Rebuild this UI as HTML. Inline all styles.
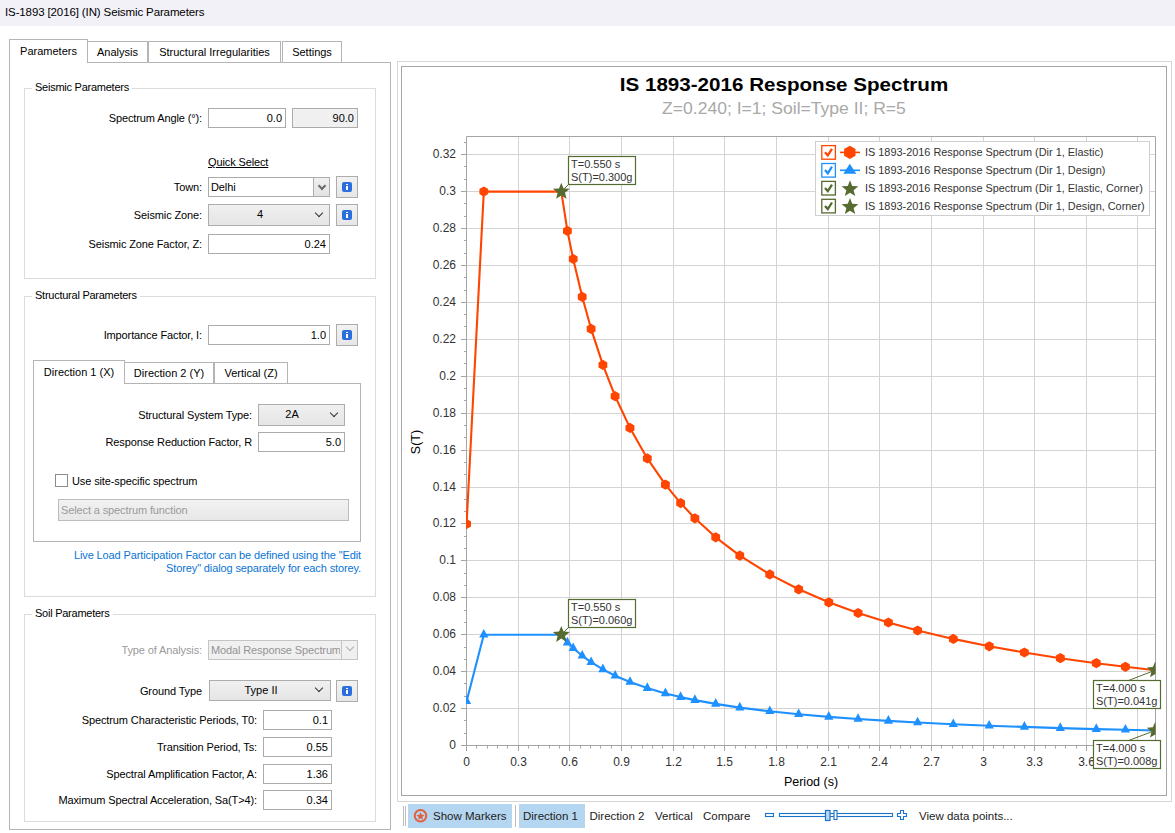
<!DOCTYPE html>
<html><head><meta charset="utf-8">
<style>
*{margin:0;padding:0;box-sizing:border-box}
html,body{width:1175px;height:833px;overflow:hidden;background:#fff;font-family:"Liberation Sans",sans-serif;font-size:11px;color:#000}
.a{position:absolute}
.t{position:absolute;white-space:nowrap;line-height:14px;height:14px;letter-spacing:-0.12px}
.r{text-align:right}
.bx{position:absolute;border:1px solid #ababab;background:#fff}
.gb{position:absolute;border:1px solid #dcdcdc}
.gt{position:absolute;background:#fff;padding:0 3px;line-height:14px;white-space:nowrap;letter-spacing:-0.25px}
.inp{position:absolute;border:1px solid #ababab;background:#fff;text-align:right;padding-right:3px;line-height:18px}
.cmb{position:absolute;border:1px solid #adadad;background:linear-gradient(#f0f0f0,#e5e5e5);text-align:center;line-height:19px}
.info{position:absolute;border:1px solid #adadad;background:linear-gradient(#f2f2f2,#e6e6e6)}
.info i{position:absolute;left:5px;top:5px;width:10px;height:10px;background:#2b6fde;border-radius:2px}
.info i:before{content:"";position:absolute;left:4px;top:2px;width:2px;height:1px;background:#fff}
.info i:after{content:"";position:absolute;left:4px;top:4px;width:2px;height:4px;background:#fff}
.chev{position:absolute;width:6px;height:6px;border-right:1px solid #333;border-bottom:1px solid #333;transform:rotate(45deg)}
.tab{position:absolute;border:1px solid #b4b4b4;border-bottom:none;background:#fff;text-align:center;line-height:20px}
</style></head><body>
<!-- title bar -->
<div class="a" style="left:0;top:0;width:1175px;height:26px;background:#f2f1f8"></div>
<div class="t" style="left:5px;top:5px;font-size:11.5px;color:#000">IS-1893 [2016] (IN) Seismic Parameters</div>

<!-- main tabs -->
<div class="a" style="left:9px;top:62px;width:382px;height:768px;border:1px solid #b4b4b4"></div>
<div class="tab" style="left:87px;top:41px;width:61px;height:21px">Analysis</div>
<div class="tab" style="left:148px;top:41px;width:133px;height:21px">Structural Irregularities</div>
<div class="tab" style="left:282px;top:41px;width:60px;height:21px">Settings</div>
<div class="tab" style="left:9px;top:39px;width:79px;height:24px;line-height:22px">Parameters</div>

<!-- group 1 -->
<div class="gb" style="left:24px;top:88px;width:352px;height:191px"></div>
<div class="gt" style="left:32px;top:80px">Seismic Parameters</div>
<div class="t r" style="left:60px;width:142px;top:111px">Spectrum Angle (°):</div>
<div class="inp" style="left:208px;top:108px;width:78px;height:20px">0.0</div>
<div class="inp" style="left:292px;top:108px;width:66px;height:20px;background:#f0f0f0">90.0</div>
<div class="t" style="left:208px;top:155px;text-decoration:underline">Quick Select</div>
<div class="t r" style="left:60px;width:142px;top:180px">Town:</div>
<div class="bx" style="left:208px;top:177px;width:122px;height:20px"></div>
<div class="t" style="left:211px;top:180px">Delhi</div>
<div class="a" style="left:313px;top:177px;width:17px;height:20px;border:1px solid #adadad;background:linear-gradient(#f0f0f0,#e3e3e3)"></div>
<div class="chev" style="left:318.5px;top:182.5px;border-color:#6a6a6a;border-width:0 2px 2px 0;width:6px;height:6px"></div>
<div class="info" style="left:336px;top:176px;width:22px;height:22px"><i></i></div>
<div class="t r" style="left:60px;width:142px;top:208px">Seismic Zone:</div>
<div class="cmb" style="left:208px;top:204px;width:122px;height:22px;padding-right:18px">4</div>
<div class="chev" style="left:316px;top:209.5px"></div>
<div class="info" style="left:336px;top:204px;width:22px;height:22px"><i></i></div>
<div class="t r" style="left:40px;width:162px;top:237px">Seismic Zone Factor, Z:</div>
<div class="inp" style="left:208px;top:234px;width:122px;height:20px">0.24</div>

<!-- group 2 -->
<div class="gb" style="left:24px;top:296px;width:352px;height:301px"></div>
<div class="gt" style="left:32px;top:288px">Structural Parameters</div>
<div class="t r" style="left:40px;width:162px;top:328px">Importance Factor, I:</div>
<div class="inp" style="left:208px;top:325px;width:122px;height:20px">1.0</div>
<div class="info" style="left:336px;top:324px;width:22px;height:22px"><i></i></div>
<div class="a" style="left:33px;top:383px;width:328px;height:159px;border:1px solid #b4b4b4"></div>
<div class="tab" style="left:124px;top:362px;width:90px;height:21px">Direction 2 (Y)</div>
<div class="tab" style="left:214px;top:362px;width:74px;height:21px">Vertical (Z)</div>
<div class="tab" style="left:33px;top:360px;width:92px;height:24px;line-height:22px">Direction 1 (X)</div>
<div class="t r" style="left:80px;width:172px;top:408px">Structural System Type:</div>
<div class="cmb" style="left:258px;top:404px;width:87px;height:22px;padding-right:19px">2A</div>
<div class="chev" style="left:331px;top:409.5px"></div>
<div class="t r" style="left:80px;width:172px;top:435px">Response Reduction Factor, R</div>
<div class="inp" style="left:258px;top:432px;width:87px;height:20px">5.0</div>
<div class="a" style="left:55px;top:474px;width:13px;height:13px;border:1px solid #8c8c8c;background:#fff"></div>
<div class="t" style="left:72px;top:474px">Use site-specific spectrum</div>
<div class="a" style="left:58px;top:499px;width:291px;height:22px;border:1px solid #bcbcbc;background:linear-gradient(#f2f2f2,#e8e8e8)"></div>
<div class="t" style="left:61px;top:503px;color:#9a9a9a">Select a spectrum function</div>
<div class="t r" style="left:39px;width:322px;top:548px;color:#0a74d4">Live Load Participation Factor can be defined using the "Edit</div>
<div class="t r" style="left:39px;width:322px;top:561px;color:#0a74d4">Storey" dialog separately for each storey.</div>

<!-- group 3 -->
<div class="gb" style="left:24px;top:614px;width:352px;height:208px"></div>
<div class="gt" style="left:32px;top:606px">Soil Parameters</div>
<div class="t r" style="left:40px;width:162px;top:643px;color:#9a9a9a">Type of Analysis:</div>
<div class="a" style="left:208px;top:640px;width:150px;height:20px;border:1px solid #c4c4c4;background:#f0f0f0"></div>
<div class="t" style="left:211px;top:643px;width:129px;overflow:hidden;color:#949494">Modal Response Spectrum</div>
<div class="a" style="left:341px;top:641px;width:1px;height:18px;background:#c4c4c4"></div>
<div class="chev" style="left:347px;top:644px;border-color:#b0b0b0"></div>
<div class="t r" style="left:40px;width:162px;top:684px">Ground Type</div>
<div class="cmb" style="left:209px;top:680px;width:122px;height:21px;padding-right:18px;line-height:18px">Type II</div>
<div class="chev" style="left:316px;top:685px"></div>
<div class="info" style="left:336px;top:680px;width:22px;height:22px"><i></i></div>
<div class="t r" style="left:30px;width:227px;top:713px">Spectrum Characteristic Periods, T0:</div>
<div class="inp" style="left:263px;top:710px;width:69px;height:20px">0.1</div>
<div class="t r" style="left:30px;width:227px;top:740px">Transition Period, Ts:</div>
<div class="inp" style="left:263px;top:737px;width:69px;height:20px">0.55</div>
<div class="t r" style="left:30px;width:227px;top:767px">Spectral Amplification Factor, A:</div>
<div class="inp" style="left:263px;top:764px;width:69px;height:20px">1.36</div>
<div class="t r" style="left:30px;width:227px;top:793px">Maximum Spectral Acceleration, Sa(T&gt;4):</div>
<div class="inp" style="left:263px;top:790px;width:69px;height:20px">0.34</div>

<!-- toolbar -->
<div class="a" style="left:408px;top:804px;width:104px;height:24px;background:#b5d6f0"></div>
<div class="a" style="left:519px;top:804px;width:66px;height:24px;background:#b5d6f0"></div>
<div class="t" style="left:433px;top:809px;font-size:11.5px;color:#222;letter-spacing:0">Show Markers</div>
<div class="t" style="left:523px;top:809px;font-size:11.5px;color:#222;letter-spacing:0">Direction 1</div>
<div class="t" style="left:589.5px;top:809px;font-size:11.5px;color:#222;letter-spacing:0">Direction 2</div>
<div class="t" style="left:655px;top:809px;font-size:11.5px;color:#222;letter-spacing:0">Vertical</div>
<div class="t" style="left:703px;top:809px;font-size:11.5px;color:#222;letter-spacing:0">Compare</div>
<div class="t" style="left:919px;top:809px;font-size:11.5px;color:#222;letter-spacing:0">View data points...</div>

<svg class="a" style="left:0;top:0" width="1175" height="833" viewBox="0 0 1175 833">
<rect x="397.5" y="61.5" width="774" height="740" fill="none" stroke="#d6d6d6"/>
<rect x="401.5" y="66.5" width="765" height="729" fill="none" stroke="#a6a6a6"/>
<text x="784" y="91" text-anchor="middle" font-family="Liberation Sans" font-weight="bold" font-size="18" fill="#000" transform="translate(784 0) scale(1.145 1) translate(-784 0)">IS 1893-2016 Response Spectrum</text>
<text x="784" y="114.5" text-anchor="middle" font-family="Liberation Sans" font-size="16" fill="#a9a9a9" transform="translate(784 0) scale(1.097 1) translate(-784 0)">Z=0.240; I=1; Soil=Type II; R=5</text>
<line x1="518.5" y1="137" x2="518.5" y2="745" stroke="#d3d3d3" stroke-width="1"/>
<line x1="569.5" y1="137" x2="569.5" y2="745" stroke="#d3d3d3" stroke-width="1"/>
<line x1="621.5" y1="137" x2="621.5" y2="745" stroke="#d3d3d3" stroke-width="1"/>
<line x1="673.5" y1="137" x2="673.5" y2="745" stroke="#d3d3d3" stroke-width="1"/>
<line x1="724.5" y1="137" x2="724.5" y2="745" stroke="#d3d3d3" stroke-width="1"/>
<line x1="776.5" y1="137" x2="776.5" y2="745" stroke="#d3d3d3" stroke-width="1"/>
<line x1="828.5" y1="137" x2="828.5" y2="745" stroke="#d3d3d3" stroke-width="1"/>
<line x1="879.5" y1="137" x2="879.5" y2="745" stroke="#d3d3d3" stroke-width="1"/>
<line x1="931.5" y1="137" x2="931.5" y2="745" stroke="#d3d3d3" stroke-width="1"/>
<line x1="983.5" y1="137" x2="983.5" y2="745" stroke="#d3d3d3" stroke-width="1"/>
<line x1="1034.5" y1="137" x2="1034.5" y2="745" stroke="#d3d3d3" stroke-width="1"/>
<line x1="1086.5" y1="137" x2="1086.5" y2="745" stroke="#d3d3d3" stroke-width="1"/>
<line x1="1137.5" y1="137" x2="1137.5" y2="745" stroke="#d3d3d3" stroke-width="1"/>
<line x1="466" y1="708.5" x2="1155" y2="708.5" stroke="#d3d3d3" stroke-width="1"/>
<line x1="466" y1="671.5" x2="1155" y2="671.5" stroke="#d3d3d3" stroke-width="1"/>
<line x1="466" y1="634.5" x2="1155" y2="634.5" stroke="#d3d3d3" stroke-width="1"/>
<line x1="466" y1="597.5" x2="1155" y2="597.5" stroke="#d3d3d3" stroke-width="1"/>
<line x1="466" y1="560.5" x2="1155" y2="560.5" stroke="#d3d3d3" stroke-width="1"/>
<line x1="466" y1="523.5" x2="1155" y2="523.5" stroke="#d3d3d3" stroke-width="1"/>
<line x1="466" y1="487.5" x2="1155" y2="487.5" stroke="#d3d3d3" stroke-width="1"/>
<line x1="466" y1="450.5" x2="1155" y2="450.5" stroke="#d3d3d3" stroke-width="1"/>
<line x1="466" y1="413.5" x2="1155" y2="413.5" stroke="#d3d3d3" stroke-width="1"/>
<line x1="466" y1="376.5" x2="1155" y2="376.5" stroke="#d3d3d3" stroke-width="1"/>
<line x1="466" y1="339.5" x2="1155" y2="339.5" stroke="#d3d3d3" stroke-width="1"/>
<line x1="466" y1="302.5" x2="1155" y2="302.5" stroke="#d3d3d3" stroke-width="1"/>
<line x1="466" y1="265.5" x2="1155" y2="265.5" stroke="#d3d3d3" stroke-width="1"/>
<line x1="466" y1="228.5" x2="1155" y2="228.5" stroke="#d3d3d3" stroke-width="1"/>
<line x1="466" y1="191.5" x2="1155" y2="191.5" stroke="#d3d3d3" stroke-width="1"/>
<line x1="466" y1="154.5" x2="1155" y2="154.5" stroke="#d3d3d3" stroke-width="1"/>
<path d="M466.5 745.5 V136.5 H1155.5 V745.5" fill="none" stroke="#a5a5a5" stroke-width="1"/>
<line x1="461" y1="745.5" x2="1156" y2="745.5" stroke="#a5a5a5" stroke-width="1"/>
<line x1="461" y1="745.5" x2="466" y2="745.5" stroke="#a5a5a5" stroke-width="1"/>
<text x="456" y="749.3" text-anchor="end" font-family="Liberation Sans" font-size="12" fill="#333">0</text>
<line x1="461" y1="708.5" x2="466" y2="708.5" stroke="#a5a5a5" stroke-width="1"/>
<text x="456" y="712.3" text-anchor="end" font-family="Liberation Sans" font-size="12" fill="#333">0.02</text>
<line x1="461" y1="671.5" x2="466" y2="671.5" stroke="#a5a5a5" stroke-width="1"/>
<text x="456" y="675.3" text-anchor="end" font-family="Liberation Sans" font-size="12" fill="#333">0.04</text>
<line x1="461" y1="634.5" x2="466" y2="634.5" stroke="#a5a5a5" stroke-width="1"/>
<text x="456" y="638.3" text-anchor="end" font-family="Liberation Sans" font-size="12" fill="#333">0.06</text>
<line x1="461" y1="597.5" x2="466" y2="597.5" stroke="#a5a5a5" stroke-width="1"/>
<text x="456" y="601.3" text-anchor="end" font-family="Liberation Sans" font-size="12" fill="#333">0.08</text>
<line x1="461" y1="560.5" x2="466" y2="560.5" stroke="#a5a5a5" stroke-width="1"/>
<text x="456" y="564.3" text-anchor="end" font-family="Liberation Sans" font-size="12" fill="#333">0.1</text>
<line x1="461" y1="523.5" x2="466" y2="523.5" stroke="#a5a5a5" stroke-width="1"/>
<text x="456" y="527.3" text-anchor="end" font-family="Liberation Sans" font-size="12" fill="#333">0.12</text>
<line x1="461" y1="487.5" x2="466" y2="487.5" stroke="#a5a5a5" stroke-width="1"/>
<text x="456" y="491.3" text-anchor="end" font-family="Liberation Sans" font-size="12" fill="#333">0.14</text>
<line x1="461" y1="450.5" x2="466" y2="450.5" stroke="#a5a5a5" stroke-width="1"/>
<text x="456" y="454.3" text-anchor="end" font-family="Liberation Sans" font-size="12" fill="#333">0.16</text>
<line x1="461" y1="413.5" x2="466" y2="413.5" stroke="#a5a5a5" stroke-width="1"/>
<text x="456" y="417.3" text-anchor="end" font-family="Liberation Sans" font-size="12" fill="#333">0.18</text>
<line x1="461" y1="376.5" x2="466" y2="376.5" stroke="#a5a5a5" stroke-width="1"/>
<text x="456" y="380.3" text-anchor="end" font-family="Liberation Sans" font-size="12" fill="#333">0.2</text>
<line x1="461" y1="339.5" x2="466" y2="339.5" stroke="#a5a5a5" stroke-width="1"/>
<text x="456" y="343.3" text-anchor="end" font-family="Liberation Sans" font-size="12" fill="#333">0.22</text>
<line x1="461" y1="302.5" x2="466" y2="302.5" stroke="#a5a5a5" stroke-width="1"/>
<text x="456" y="306.3" text-anchor="end" font-family="Liberation Sans" font-size="12" fill="#333">0.24</text>
<line x1="461" y1="265.5" x2="466" y2="265.5" stroke="#a5a5a5" stroke-width="1"/>
<text x="456" y="269.3" text-anchor="end" font-family="Liberation Sans" font-size="12" fill="#333">0.26</text>
<line x1="461" y1="228.5" x2="466" y2="228.5" stroke="#a5a5a5" stroke-width="1"/>
<text x="456" y="232.3" text-anchor="end" font-family="Liberation Sans" font-size="12" fill="#333">0.28</text>
<line x1="461" y1="191.5" x2="466" y2="191.5" stroke="#a5a5a5" stroke-width="1"/>
<text x="456" y="195.3" text-anchor="end" font-family="Liberation Sans" font-size="12" fill="#333">0.3</text>
<line x1="461" y1="154.5" x2="466" y2="154.5" stroke="#a5a5a5" stroke-width="1"/>
<text x="456" y="158.3" text-anchor="end" font-family="Liberation Sans" font-size="12" fill="#333">0.32</text>
<line x1="464" y1="733.5" x2="466" y2="733.5" stroke="#a5a5a5" stroke-width="1"/>
<line x1="464" y1="720.5" x2="466" y2="720.5" stroke="#a5a5a5" stroke-width="1"/>
<line x1="464" y1="696.5" x2="466" y2="696.5" stroke="#a5a5a5" stroke-width="1"/>
<line x1="464" y1="683.5" x2="466" y2="683.5" stroke="#a5a5a5" stroke-width="1"/>
<line x1="464" y1="659.5" x2="466" y2="659.5" stroke="#a5a5a5" stroke-width="1"/>
<line x1="464" y1="647.5" x2="466" y2="647.5" stroke="#a5a5a5" stroke-width="1"/>
<line x1="464" y1="622.5" x2="466" y2="622.5" stroke="#a5a5a5" stroke-width="1"/>
<line x1="464" y1="610.5" x2="466" y2="610.5" stroke="#a5a5a5" stroke-width="1"/>
<line x1="464" y1="585.5" x2="466" y2="585.5" stroke="#a5a5a5" stroke-width="1"/>
<line x1="464" y1="573.5" x2="466" y2="573.5" stroke="#a5a5a5" stroke-width="1"/>
<line x1="464" y1="548.5" x2="466" y2="548.5" stroke="#a5a5a5" stroke-width="1"/>
<line x1="464" y1="536.5" x2="466" y2="536.5" stroke="#a5a5a5" stroke-width="1"/>
<line x1="464" y1="511.5" x2="466" y2="511.5" stroke="#a5a5a5" stroke-width="1"/>
<line x1="464" y1="499.5" x2="466" y2="499.5" stroke="#a5a5a5" stroke-width="1"/>
<line x1="464" y1="474.5" x2="466" y2="474.5" stroke="#a5a5a5" stroke-width="1"/>
<line x1="464" y1="462.5" x2="466" y2="462.5" stroke="#a5a5a5" stroke-width="1"/>
<line x1="464" y1="437.5" x2="466" y2="437.5" stroke="#a5a5a5" stroke-width="1"/>
<line x1="464" y1="425.5" x2="466" y2="425.5" stroke="#a5a5a5" stroke-width="1"/>
<line x1="464" y1="400.5" x2="466" y2="400.5" stroke="#a5a5a5" stroke-width="1"/>
<line x1="464" y1="388.5" x2="466" y2="388.5" stroke="#a5a5a5" stroke-width="1"/>
<line x1="464" y1="363.5" x2="466" y2="363.5" stroke="#a5a5a5" stroke-width="1"/>
<line x1="464" y1="351.5" x2="466" y2="351.5" stroke="#a5a5a5" stroke-width="1"/>
<line x1="464" y1="326.5" x2="466" y2="326.5" stroke="#a5a5a5" stroke-width="1"/>
<line x1="464" y1="314.5" x2="466" y2="314.5" stroke="#a5a5a5" stroke-width="1"/>
<line x1="464" y1="290.5" x2="466" y2="290.5" stroke="#a5a5a5" stroke-width="1"/>
<line x1="464" y1="277.5" x2="466" y2="277.5" stroke="#a5a5a5" stroke-width="1"/>
<line x1="464" y1="253.5" x2="466" y2="253.5" stroke="#a5a5a5" stroke-width="1"/>
<line x1="464" y1="240.5" x2="466" y2="240.5" stroke="#a5a5a5" stroke-width="1"/>
<line x1="464" y1="216.5" x2="466" y2="216.5" stroke="#a5a5a5" stroke-width="1"/>
<line x1="464" y1="203.5" x2="466" y2="203.5" stroke="#a5a5a5" stroke-width="1"/>
<line x1="464" y1="179.5" x2="466" y2="179.5" stroke="#a5a5a5" stroke-width="1"/>
<line x1="464" y1="166.5" x2="466" y2="166.5" stroke="#a5a5a5" stroke-width="1"/>
<line x1="464" y1="142.5" x2="466" y2="142.5" stroke="#a5a5a5" stroke-width="1"/>
<line x1="466.5" y1="746" x2="466.5" y2="751" stroke="#a5a5a5" stroke-width="1"/>
<text x="466.5" y="766" text-anchor="middle" font-family="Liberation Sans" font-size="12" fill="#333">0</text>
<line x1="518.5" y1="746" x2="518.5" y2="751" stroke="#a5a5a5" stroke-width="1"/>
<text x="518.5" y="766" text-anchor="middle" font-family="Liberation Sans" font-size="12" fill="#333">0.3</text>
<line x1="569.5" y1="746" x2="569.5" y2="751" stroke="#a5a5a5" stroke-width="1"/>
<text x="569.5" y="766" text-anchor="middle" font-family="Liberation Sans" font-size="12" fill="#333">0.6</text>
<line x1="621.5" y1="746" x2="621.5" y2="751" stroke="#a5a5a5" stroke-width="1"/>
<text x="621.5" y="766" text-anchor="middle" font-family="Liberation Sans" font-size="12" fill="#333">0.9</text>
<line x1="673.5" y1="746" x2="673.5" y2="751" stroke="#a5a5a5" stroke-width="1"/>
<text x="673.5" y="766" text-anchor="middle" font-family="Liberation Sans" font-size="12" fill="#333">1.2</text>
<line x1="724.5" y1="746" x2="724.5" y2="751" stroke="#a5a5a5" stroke-width="1"/>
<text x="724.5" y="766" text-anchor="middle" font-family="Liberation Sans" font-size="12" fill="#333">1.5</text>
<line x1="776.5" y1="746" x2="776.5" y2="751" stroke="#a5a5a5" stroke-width="1"/>
<text x="776.5" y="766" text-anchor="middle" font-family="Liberation Sans" font-size="12" fill="#333">1.8</text>
<line x1="828.5" y1="746" x2="828.5" y2="751" stroke="#a5a5a5" stroke-width="1"/>
<text x="828.5" y="766" text-anchor="middle" font-family="Liberation Sans" font-size="12" fill="#333">2.1</text>
<line x1="879.5" y1="746" x2="879.5" y2="751" stroke="#a5a5a5" stroke-width="1"/>
<text x="879.5" y="766" text-anchor="middle" font-family="Liberation Sans" font-size="12" fill="#333">2.4</text>
<line x1="931.5" y1="746" x2="931.5" y2="751" stroke="#a5a5a5" stroke-width="1"/>
<text x="931.5" y="766" text-anchor="middle" font-family="Liberation Sans" font-size="12" fill="#333">2.7</text>
<line x1="983.5" y1="746" x2="983.5" y2="751" stroke="#a5a5a5" stroke-width="1"/>
<text x="983.5" y="766" text-anchor="middle" font-family="Liberation Sans" font-size="12" fill="#333">3</text>
<line x1="1034.5" y1="746" x2="1034.5" y2="751" stroke="#a5a5a5" stroke-width="1"/>
<text x="1034.5" y="766" text-anchor="middle" font-family="Liberation Sans" font-size="12" fill="#333">3.3</text>
<line x1="1086.5" y1="746" x2="1086.5" y2="751" stroke="#a5a5a5" stroke-width="1"/>
<text x="1086.5" y="766" text-anchor="middle" font-family="Liberation Sans" font-size="12" fill="#333">3.6</text>
<line x1="1137.5" y1="746" x2="1137.5" y2="751" stroke="#a5a5a5" stroke-width="1"/>
<text x="1137.5" y="766" text-anchor="middle" font-family="Liberation Sans" font-size="12" fill="#333">3.9</text>
<line x1="476.5" y1="746" x2="476.5" y2="748.5" stroke="#a5a5a5" stroke-width="1"/>
<line x1="487.5" y1="746" x2="487.5" y2="748.5" stroke="#a5a5a5" stroke-width="1"/>
<line x1="497.5" y1="746" x2="497.5" y2="748.5" stroke="#a5a5a5" stroke-width="1"/>
<line x1="507.5" y1="746" x2="507.5" y2="748.5" stroke="#a5a5a5" stroke-width="1"/>
<line x1="528.5" y1="746" x2="528.5" y2="748.5" stroke="#a5a5a5" stroke-width="1"/>
<line x1="538.5" y1="746" x2="538.5" y2="748.5" stroke="#a5a5a5" stroke-width="1"/>
<line x1="549.5" y1="746" x2="549.5" y2="748.5" stroke="#a5a5a5" stroke-width="1"/>
<line x1="559.5" y1="746" x2="559.5" y2="748.5" stroke="#a5a5a5" stroke-width="1"/>
<line x1="580.5" y1="746" x2="580.5" y2="748.5" stroke="#a5a5a5" stroke-width="1"/>
<line x1="590.5" y1="746" x2="590.5" y2="748.5" stroke="#a5a5a5" stroke-width="1"/>
<line x1="600.5" y1="746" x2="600.5" y2="748.5" stroke="#a5a5a5" stroke-width="1"/>
<line x1="611.5" y1="746" x2="611.5" y2="748.5" stroke="#a5a5a5" stroke-width="1"/>
<line x1="631.5" y1="746" x2="631.5" y2="748.5" stroke="#a5a5a5" stroke-width="1"/>
<line x1="642.5" y1="746" x2="642.5" y2="748.5" stroke="#a5a5a5" stroke-width="1"/>
<line x1="652.5" y1="746" x2="652.5" y2="748.5" stroke="#a5a5a5" stroke-width="1"/>
<line x1="662.5" y1="746" x2="662.5" y2="748.5" stroke="#a5a5a5" stroke-width="1"/>
<line x1="683.5" y1="746" x2="683.5" y2="748.5" stroke="#a5a5a5" stroke-width="1"/>
<line x1="693.5" y1="746" x2="693.5" y2="748.5" stroke="#a5a5a5" stroke-width="1"/>
<line x1="704.5" y1="746" x2="704.5" y2="748.5" stroke="#a5a5a5" stroke-width="1"/>
<line x1="714.5" y1="746" x2="714.5" y2="748.5" stroke="#a5a5a5" stroke-width="1"/>
<line x1="735.5" y1="746" x2="735.5" y2="748.5" stroke="#a5a5a5" stroke-width="1"/>
<line x1="745.5" y1="746" x2="745.5" y2="748.5" stroke="#a5a5a5" stroke-width="1"/>
<line x1="755.5" y1="746" x2="755.5" y2="748.5" stroke="#a5a5a5" stroke-width="1"/>
<line x1="766.5" y1="746" x2="766.5" y2="748.5" stroke="#a5a5a5" stroke-width="1"/>
<line x1="786.5" y1="746" x2="786.5" y2="748.5" stroke="#a5a5a5" stroke-width="1"/>
<line x1="797.5" y1="746" x2="797.5" y2="748.5" stroke="#a5a5a5" stroke-width="1"/>
<line x1="807.5" y1="746" x2="807.5" y2="748.5" stroke="#a5a5a5" stroke-width="1"/>
<line x1="817.5" y1="746" x2="817.5" y2="748.5" stroke="#a5a5a5" stroke-width="1"/>
<line x1="838.5" y1="746" x2="838.5" y2="748.5" stroke="#a5a5a5" stroke-width="1"/>
<line x1="848.5" y1="746" x2="848.5" y2="748.5" stroke="#a5a5a5" stroke-width="1"/>
<line x1="859.5" y1="746" x2="859.5" y2="748.5" stroke="#a5a5a5" stroke-width="1"/>
<line x1="869.5" y1="746" x2="869.5" y2="748.5" stroke="#a5a5a5" stroke-width="1"/>
<line x1="890.5" y1="746" x2="890.5" y2="748.5" stroke="#a5a5a5" stroke-width="1"/>
<line x1="900.5" y1="746" x2="900.5" y2="748.5" stroke="#a5a5a5" stroke-width="1"/>
<line x1="910.5" y1="746" x2="910.5" y2="748.5" stroke="#a5a5a5" stroke-width="1"/>
<line x1="921.5" y1="746" x2="921.5" y2="748.5" stroke="#a5a5a5" stroke-width="1"/>
<line x1="941.5" y1="746" x2="941.5" y2="748.5" stroke="#a5a5a5" stroke-width="1"/>
<line x1="952.5" y1="746" x2="952.5" y2="748.5" stroke="#a5a5a5" stroke-width="1"/>
<line x1="962.5" y1="746" x2="962.5" y2="748.5" stroke="#a5a5a5" stroke-width="1"/>
<line x1="972.5" y1="746" x2="972.5" y2="748.5" stroke="#a5a5a5" stroke-width="1"/>
<line x1="993.5" y1="746" x2="993.5" y2="748.5" stroke="#a5a5a5" stroke-width="1"/>
<line x1="1003.5" y1="746" x2="1003.5" y2="748.5" stroke="#a5a5a5" stroke-width="1"/>
<line x1="1014.5" y1="746" x2="1014.5" y2="748.5" stroke="#a5a5a5" stroke-width="1"/>
<line x1="1024.5" y1="746" x2="1024.5" y2="748.5" stroke="#a5a5a5" stroke-width="1"/>
<line x1="1045.5" y1="746" x2="1045.5" y2="748.5" stroke="#a5a5a5" stroke-width="1"/>
<line x1="1055.5" y1="746" x2="1055.5" y2="748.5" stroke="#a5a5a5" stroke-width="1"/>
<line x1="1065.5" y1="746" x2="1065.5" y2="748.5" stroke="#a5a5a5" stroke-width="1"/>
<line x1="1076.5" y1="746" x2="1076.5" y2="748.5" stroke="#a5a5a5" stroke-width="1"/>
<line x1="1096.5" y1="746" x2="1096.5" y2="748.5" stroke="#a5a5a5" stroke-width="1"/>
<line x1="1106.5" y1="746" x2="1106.5" y2="748.5" stroke="#a5a5a5" stroke-width="1"/>
<line x1="1117.5" y1="746" x2="1117.5" y2="748.5" stroke="#a5a5a5" stroke-width="1"/>
<line x1="1127.5" y1="746" x2="1127.5" y2="748.5" stroke="#a5a5a5" stroke-width="1"/>
<line x1="1148.5" y1="746" x2="1148.5" y2="748.5" stroke="#a5a5a5" stroke-width="1"/>
<text x="811" y="786" text-anchor="middle" font-family="Liberation Sans" font-size="12.5" fill="#000">Period (s)</text>
<text transform="translate(419.5 442) rotate(-90)" text-anchor="middle" font-family="Liberation Sans" font-size="12.5" fill="#000">S(T)</text>
<clipPath id="pc"><rect x="466" y="136" width="689.5" height="609.5"/></clipPath>
<g clip-path="url(#pc)">
<path d="M466.6 523.9 L483.8 191.6 L561.3 191.6 L567.4 230.9 L573.2 259.0 L582.2 296.8 L591.1 328.8 L602.9 364.9 L615.1 396.2 L630.0 427.9 L647.3 458.4 L665.4 484.6 L680.6 503.1 L694.9 518.3 L715.7 537.3 L739.8 555.6 L769.8 574.4 L798.7 589.3 L828.8 602.3 L858.1 613.0 L888.4 622.5 L917.6 630.5 L953.3 638.9 L989.2 646.3 L1024.4 652.5 L1060.3 658.2 L1096.3 663.2 L1125.4 666.8 L1155.2 670.2" fill="none" stroke="#ff4500" stroke-width="2.1" stroke-linejoin="round"/>
<path d="M466.6 701.2 L483.8 634.7 L561.3 634.7 L567.4 642.6 L573.2 648.2 L582.2 655.8 L591.1 662.2 L602.9 669.4 L615.1 675.7 L630.0 682.0 L647.3 688.1 L665.4 693.4 L680.6 697.1 L694.9 700.1 L715.7 703.9 L739.8 707.6 L769.8 711.3 L798.7 714.3 L828.8 716.9 L858.1 719.0 L888.4 720.9 L917.6 722.5 L953.3 724.2 L989.2 725.7 L1024.4 726.9 L1060.3 728.1 L1096.3 729.1 L1125.4 729.8 L1155.2 730.5" fill="none" stroke="#1e90ff" stroke-width="2.1" stroke-linejoin="round"/>
<polygon points="466.6,518.8 471.0,521.4 471.0,526.5 466.6,529.0 462.2,526.5 462.2,521.4" fill="#ff4500"/>
<polygon points="466.6,695.4 471.2,704.0 462.0,704.0" fill="#1e90ff"/>
<polygon points="483.8,186.5 488.2,189.0 488.2,194.1 483.8,196.7 479.4,194.1 479.4,189.0" fill="#ff4500"/>
<polygon points="483.8,628.9 488.4,637.5 479.2,637.5" fill="#1e90ff"/>
<polygon points="567.4,225.8 571.8,228.4 571.8,233.5 567.4,236.0 563.0,233.5 563.0,228.4" fill="#ff4500"/>
<polygon points="567.4,636.8 572.0,645.4 562.8,645.4" fill="#1e90ff"/>
<polygon points="573.2,253.9 577.6,256.4 577.6,261.5 573.2,264.1 568.8,261.5 568.8,256.4" fill="#ff4500"/>
<polygon points="573.2,642.4 577.8,651.0 568.6,651.0" fill="#1e90ff"/>
<polygon points="582.2,291.7 586.6,294.3 586.6,299.4 582.2,301.9 577.8,299.4 577.8,294.3" fill="#ff4500"/>
<polygon points="582.2,650.0 586.8,658.6 577.6,658.6" fill="#1e90ff"/>
<polygon points="591.1,323.7 595.5,326.3 595.5,331.4 591.1,333.9 586.7,331.4 586.7,326.3" fill="#ff4500"/>
<polygon points="591.1,656.4 595.7,665.0 586.5,665.0" fill="#1e90ff"/>
<polygon points="602.9,359.8 607.3,362.4 607.3,367.5 602.9,370.0 598.5,367.5 598.5,362.4" fill="#ff4500"/>
<polygon points="602.9,663.6 607.5,672.2 598.3,672.2" fill="#1e90ff"/>
<polygon points="615.1,391.1 619.5,393.7 619.5,398.8 615.1,401.3 610.7,398.8 610.7,393.7" fill="#ff4500"/>
<polygon points="615.1,669.9 619.7,678.5 610.5,678.5" fill="#1e90ff"/>
<polygon points="630.0,422.8 634.4,425.4 634.4,430.5 630.0,433.0 625.5,430.5 625.5,425.4" fill="#ff4500"/>
<polygon points="630.0,676.2 634.6,684.8 625.4,684.8" fill="#1e90ff"/>
<polygon points="647.3,453.3 651.7,455.9 651.7,461.0 647.3,463.5 642.9,461.0 642.9,455.9" fill="#ff4500"/>
<polygon points="647.3,682.3 651.9,690.9 642.7,690.9" fill="#1e90ff"/>
<polygon points="665.4,479.5 669.8,482.1 669.8,487.2 665.4,489.7 661.0,487.2 661.0,482.1" fill="#ff4500"/>
<polygon points="665.4,687.6 670.0,696.2 660.8,696.2" fill="#1e90ff"/>
<polygon points="680.6,498.0 685.0,500.5 685.0,505.6 680.6,508.2 676.2,505.6 676.2,500.5" fill="#ff4500"/>
<polygon points="680.6,691.3 685.2,699.9 676.0,699.9" fill="#1e90ff"/>
<polygon points="694.9,513.2 699.3,515.7 699.3,520.8 694.9,523.4 690.5,520.8 690.5,515.7" fill="#ff4500"/>
<polygon points="694.9,694.3 699.5,702.9 690.3,702.9" fill="#1e90ff"/>
<polygon points="715.7,532.2 720.1,534.7 720.1,539.8 715.7,542.4 711.3,539.8 711.3,534.7" fill="#ff4500"/>
<polygon points="715.7,698.1 720.3,706.7 711.1,706.7" fill="#1e90ff"/>
<polygon points="739.8,550.5 744.2,553.1 744.2,558.2 739.8,560.7 735.4,558.2 735.4,553.1" fill="#ff4500"/>
<polygon points="739.8,701.8 744.4,710.4 735.2,710.4" fill="#1e90ff"/>
<polygon points="769.8,569.3 774.2,571.9 774.2,577.0 769.8,579.5 765.3,577.0 765.3,571.9" fill="#ff4500"/>
<polygon points="769.8,705.5 774.4,714.1 765.2,714.1" fill="#1e90ff"/>
<polygon points="798.7,584.2 803.1,586.8 803.1,591.9 798.7,594.4 794.3,591.9 794.3,586.8" fill="#ff4500"/>
<polygon points="798.7,708.5 803.3,717.1 794.1,717.1" fill="#1e90ff"/>
<polygon points="828.8,597.2 833.2,599.8 833.2,604.9 828.8,607.4 824.4,604.9 824.4,599.8" fill="#ff4500"/>
<polygon points="828.8,711.1 833.4,719.7 824.2,719.7" fill="#1e90ff"/>
<polygon points="858.1,607.9 862.5,610.5 862.5,615.6 858.1,618.1 853.7,615.6 853.7,610.5" fill="#ff4500"/>
<polygon points="858.1,713.2 862.7,721.8 853.5,721.8" fill="#1e90ff"/>
<polygon points="888.4,617.4 892.8,620.0 892.8,625.1 888.4,627.6 884.0,625.1 884.0,620.0" fill="#ff4500"/>
<polygon points="888.4,715.1 893.0,723.7 883.8,723.7" fill="#1e90ff"/>
<polygon points="917.6,625.4 922.0,628.0 922.0,633.1 917.6,635.6 913.2,633.1 913.2,628.0" fill="#ff4500"/>
<polygon points="917.6,716.7 922.2,725.3 913.0,725.3" fill="#1e90ff"/>
<polygon points="953.3,633.8 957.7,636.4 957.7,641.5 953.3,644.0 948.9,641.5 948.9,636.4" fill="#ff4500"/>
<polygon points="953.3,718.4 957.9,727.0 948.7,727.0" fill="#1e90ff"/>
<polygon points="989.2,641.2 993.7,643.7 993.7,648.8 989.2,651.4 984.8,648.8 984.8,643.7" fill="#ff4500"/>
<polygon points="989.2,719.9 993.8,728.5 984.6,728.5" fill="#1e90ff"/>
<polygon points="1024.4,647.4 1028.8,650.0 1028.8,655.1 1024.4,657.6 1019.9,655.1 1019.9,650.0" fill="#ff4500"/>
<polygon points="1024.4,721.1 1029.0,729.7 1019.8,729.7" fill="#1e90ff"/>
<polygon points="1060.3,653.1 1064.8,655.6 1064.8,660.7 1060.3,663.3 1055.9,660.7 1055.9,655.6" fill="#ff4500"/>
<polygon points="1060.3,722.3 1064.9,730.9 1055.7,730.9" fill="#1e90ff"/>
<polygon points="1096.3,658.1 1100.7,660.6 1100.7,665.7 1096.3,668.3 1091.9,665.7 1091.9,660.6" fill="#ff4500"/>
<polygon points="1096.3,723.3 1100.9,731.9 1091.7,731.9" fill="#1e90ff"/>
<polygon points="1125.4,661.7 1129.8,664.2 1129.8,669.3 1125.4,671.9 1121.0,669.3 1121.0,664.2" fill="#ff4500"/>
<polygon points="1125.4,724.0 1130.0,732.6 1120.8,732.6" fill="#1e90ff"/>
<polygon points="561.3,182.8 563.6,188.4 569.7,188.8 565.0,192.8 566.5,198.7 561.3,195.5 556.1,198.7 557.6,192.8 552.9,188.8 559.0,188.4" fill="#556b2f"/>
<polygon points="561.3,625.9 563.6,631.6 569.7,632.0 565.0,635.9 566.5,641.9 561.3,638.6 556.1,641.9 557.6,635.9 552.9,632.0 559.0,631.6" fill="#556b2f"/>
<polygon points="1155.2,661.4 1157.5,667.0 1163.6,667.5 1158.9,671.4 1160.4,677.3 1155.2,674.1 1150.0,677.3 1151.5,671.4 1146.8,667.5 1152.9,667.0" fill="#556b2f"/>
<polygon points="1155.2,721.7 1157.5,727.3 1163.6,727.8 1158.9,731.7 1160.4,737.6 1155.2,734.4 1150.0,737.6 1151.5,731.7 1146.8,727.8 1152.9,727.3" fill="#556b2f"/>
</g>
<line x1="561.3" y1="191.6" x2="568.5" y2="184.5" stroke="#556b2f" stroke-width="1"/><rect x="568.5" y="156.5" width="67" height="28" fill="#fff" stroke="#556b2f" stroke-width="1.2"/><text x="571" y="167.5" font-family="Liberation Sans" font-size="11" fill="#333">T=0.550 s</text><text x="571" y="180.5" font-family="Liberation Sans" font-size="11" fill="#333">S(T)=0.300g</text>
<line x1="561.3" y1="634.7" x2="568.5" y2="627.5" stroke="#556b2f" stroke-width="1"/><rect x="568.5" y="599.5" width="67" height="28" fill="#fff" stroke="#556b2f" stroke-width="1.2"/><text x="571" y="610.5" font-family="Liberation Sans" font-size="11" fill="#333">T=0.550 s</text><text x="571" y="623.5" font-family="Liberation Sans" font-size="11" fill="#333">S(T)=0.060g</text>
<line x1="1155.2" y1="670.2" x2="1128.5" y2="680.5" stroke="#556b2f" stroke-width="1"/><rect x="1093.5" y="680.5" width="67" height="28" fill="#fff" stroke="#556b2f" stroke-width="1.2"/><text x="1096" y="691.5" font-family="Liberation Sans" font-size="11" fill="#333">T=4.000 s</text><text x="1096" y="704.5" font-family="Liberation Sans" font-size="11" fill="#333">S(T)=0.041g</text>
<line x1="1155.2" y1="730.5" x2="1128.5" y2="740.5" stroke="#556b2f" stroke-width="1"/><rect x="1093.5" y="740.5" width="67" height="28" fill="#fff" stroke="#556b2f" stroke-width="1.2"/><text x="1096" y="751.5" font-family="Liberation Sans" font-size="11" fill="#333">T=4.000 s</text><text x="1096" y="764.5" font-family="Liberation Sans" font-size="11" fill="#333">S(T)=0.008g</text>
<rect x="815.5" y="141.5" width="334" height="74" fill="#fff" stroke="#cfcfcf"/>
<rect x="821.8" y="145.6" width="13.6" height="13.6" fill="#fff" stroke="#ff4500" stroke-width="1.3"/>
<path d="M825 152.2 L827.8 155.4 L832 148.8" fill="none" stroke="#ff4500" stroke-width="2.3"/>
<line x1="840" y1="152.4" x2="860" y2="152.4" stroke="#ff4500" stroke-width="1.6"/>
<polygon points="849.8,145.8 855.5,149.1 855.5,155.7 849.8,159.0 844.1,155.7 844.1,149.1" fill="#ff4500"/>
<text x="865" y="156.4" font-family="Liberation Sans" font-size="10.9" fill="#333">IS 1893-2016 Response Spectrum (Dir 1, Elastic)</text>
<rect x="821.8" y="163.5" width="13.6" height="13.6" fill="#fff" stroke="#1e90ff" stroke-width="1.3"/>
<path d="M825 170.1 L827.8 173.3 L832 166.7" fill="none" stroke="#1e90ff" stroke-width="2.3"/>
<line x1="840" y1="170.3" x2="860" y2="170.3" stroke="#1e90ff" stroke-width="1.6"/>
<polygon points="849.8,163.8 856.3,173.8 843.3,173.8" fill="#1e90ff"/>
<text x="865" y="174.3" font-family="Liberation Sans" font-size="10.9" fill="#333">IS 1893-2016 Response Spectrum (Dir 1, Design)</text>
<rect x="821.8" y="181.4" width="13.6" height="13.6" fill="#fff" stroke="#556b2f" stroke-width="1.3"/>
<path d="M825 188.0 L827.8 191.2 L832 184.6" fill="none" stroke="#556b2f" stroke-width="2.3"/>
<polygon points="850.0,180.2 852.2,185.9 858.4,186.3 853.6,190.2 855.2,196.1 850.0,192.8 844.8,196.1 846.4,190.2 841.6,186.3 847.8,185.9" fill="#556b2f"/>
<text x="865" y="192.2" font-family="Liberation Sans" font-size="10.9" fill="#333">IS 1893-2016 Response Spectrum (Dir 1, Elastic, Corner)</text>
<rect x="821.8" y="199.3" width="13.6" height="13.6" fill="#fff" stroke="#556b2f" stroke-width="1.3"/>
<path d="M825 205.9 L827.8 209.1 L832 202.5" fill="none" stroke="#556b2f" stroke-width="2.3"/>
<polygon points="850.0,198.1 852.2,203.8 858.4,204.2 853.6,208.1 855.2,214.0 850.0,210.7 844.8,214.0 846.4,208.1 841.6,204.2 847.8,203.8" fill="#556b2f"/>
<text x="865" y="210.1" font-family="Liberation Sans" font-size="10.9" fill="#333">IS 1893-2016 Response Spectrum (Dir 1, Design, Corner)</text>
<rect x="765.5" y="813.5" width="8" height="3" fill="#fff" stroke="#1a73c8" stroke-width="1.1"/>
<rect x="779.5" y="813.5" width="113" height="3" fill="#fff" stroke="#1a73c8" stroke-width="1.1"/>
<rect x="834" y="810.5" width="3" height="9" fill="#fff" stroke="#1a73c8" stroke-width="1.1"/>
<rect x="825.5" y="810.5" width="4.5" height="10" fill="#bcd8f0" stroke="#1a73c8" stroke-width="1.2"/>
<path d="M900.5 810.5 h3 v3 h3 v3 h-3 v3 h-3 v-3 h-3 v-3 h3 z" fill="#fff" stroke="#1a73c8" stroke-width="1.1"/>
<circle cx="420.5" cy="815.8" r="5.8" fill="none" stroke="#e0603c" stroke-width="2"/>
<polygon points="420.5,812.0 421.6,814.8 424.6,815.0 422.3,816.9 423.0,819.8 420.5,818.2 418.0,819.8 418.7,816.9 416.4,815.0 419.4,814.8" fill="#e0603c"/>
<line x1="403.5" y1="806" x2="403.5" y2="826" stroke="#bdbdbd"/><line x1="405.5" y1="806" x2="405.5" y2="826" stroke="#bdbdbd"/>
<line x1="515.5" y1="805" x2="515.5" y2="827" stroke="#bdbdbd"/>
</svg>
</body></html>
